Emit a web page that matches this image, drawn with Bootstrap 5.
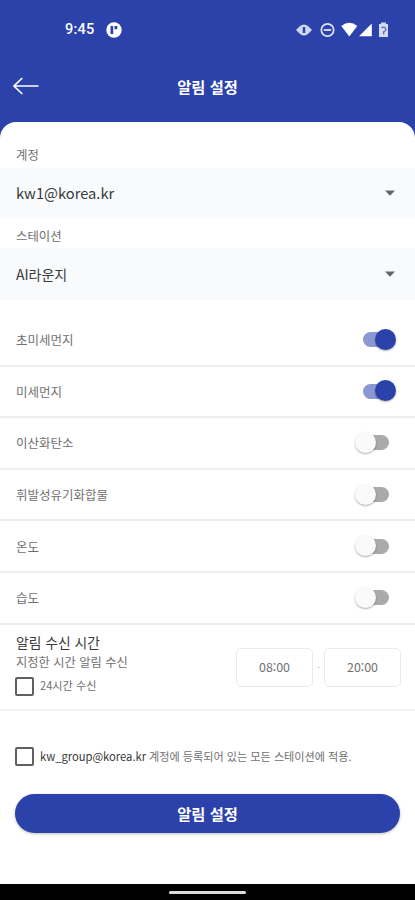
<!DOCTYPE html>
<html lang="ko">
<head>
<meta charset="utf-8">
<meta name="viewport" content="width=device-width, initial-scale=1">
<title>알림 설정</title>
<link href="https://cdn.jsdelivr.net/npm/bootstrap@5.3.0/dist/css/bootstrap.min.css" rel="stylesheet">
<style>
  :root { --brand: #2c42ab; --line: #eeeeee; }
  body { font-family: "Noto Sans CJK KR", sans-serif; background: var(--brand); color: #707070; height: 900px; overflow: hidden; line-height: 1.2; }
  svg { display: block; }
  .status { height: 60px; padding: 0 26px 0 65px; }
  .clock { font: 500 14.5px/1 Roboto, sans-serif; letter-spacing: .2px; width: 41px; padding-top: 1px; }
  .appbar { height: 62px; padding: 0 13px 10px; }
  .appbar h1 { font-size: 15.3px; }
  .appbar .edge { width: 26px; }
  .sheet { border-radius: 16px 16px 0 0; }
  .field-label { font-size: 12.4px; padding: 0 16px; }
  .first-label { height: 46px; padding-top: 20px; }
  .second-label { height: 30px; padding-top: 6px; }
  .picker { background: #f8fafc; color: #3a3a3a; font-size: 14px; padding: 0 19px 0 16px; }
  .picker.account { height: 50px; font-size: 14.7px; }
  .picker.station { height: 52px; }
  .toggles { margin-top: 15px; }
  .toggle-row { height: 51.6px; border-bottom: 2px solid var(--line); padding: 0 19px 0 16px; font-size: 12.5px; }
  .track { width: 34px; height: 22px; }
  .track::before { content: ""; width: 26px; height: 15px; border-radius: 8px; background: #aaa; margin-left: 1px; }
  .knob { width: 21px; height: 21px; left: -7px; top: 0; background: #fafafa; box-shadow: 0 1px 2px rgba(0,0,0,.32); }
  .track.on::before { background: #8c98d1; }
  .track.on .knob { left: 13px; background: var(--brand); }
  .times { height: 86px; padding: 7px 14px 0 16px; border-bottom: 2px solid #f3f3f3; }
  .times h2 { font-size: 13.8px; line-height: 20px; color: #3a3a3a; font-weight: 400; }
  .times p { font-size: 12.25px; line-height: 20px; }
  .check-row { margin-top: 5px; }
  .box { width: 19px; height: 19px; border: 2px solid #606060; border-radius: 2px; margin: 0 6px 0 -1px; }
  .small-text { font-size: 11.15px; }
  .time-box { width: 77px; height: 39px; border: 1.5px solid #e9e9e9; border-radius: 5px; font-size: 12.4px; }
  .dash { width: 11px; color: #ccc; font-size: 10px; }
  .apply { margin: 36px 16px 0; height: 20px; }
  .apply .small-text { letter-spacing: -.03px; }
  .apply b { font-weight: 400; color: #3a3a3a; font-size: 11.25px; }
  .submit, .submit:hover { margin: 27px 15px 0; height: 39px; background: var(--brand); color: #fff; font-size: 15.3px; box-shadow: 0 1px 3px rgba(0,0,0,.25); }
  .navbar-strip { height: 16px; }
  .navbar-strip span { width: 77px; height: 3px; background: #ddd; }
</style>
</head>
<body class="d-flex flex-column">
<header class="text-white flex-shrink-0">
  <div class="status d-flex align-items-center">
    <span class="clock">9:45</span>
    <svg width="16" height="16" viewBox="0 0 16 16"><circle cx="8" cy="8" r="7.7" fill="#fff"/><path d="M4.5 4h2.7v8H4.5zM8.5 4h2.8v3.2H8.5z" fill="#2c42ab"/></svg>
    <svg class="ms-auto" width="93" height="18" viewBox="296 21 93 18">
      <path d="M296 30l4-4q4-3 8 0l4 4-4 4q-4 3-8 0z" fill="#cfd5f0"/><path d="M302.8 27h2.4v6h-2.4z" fill="#2c42ab"/>
      <circle cx="327.5" cy="30" r="6.2" fill="none" stroke="#e0e4f6" stroke-width="1.7"/><path d="M323.8 30h7.4" stroke="#e0e4f6" stroke-width="1.8"/>
      <path d="M341.3 26q8-6.5 16 0l-8 10.5z" fill="#fff"/><path d="M371.8 23.5v12.8H359z" fill="#fff"/>
      <path d="M381 22.5h5v1.5h2v13h-9V24h2z" fill="#d5daf2"/><path d="M381.5 28.2q2-2 3.8 0t-1.6 3.5v2.8" fill="none" stroke="#5366bd" stroke-width="1.2"/>
    </svg>
  </div>
  <div class="appbar d-flex align-items-center justify-content-between">
    <svg class="edge" width="26" height="18" viewBox="0 0 26 18" fill="none" stroke="#fff" stroke-width="1.7"><path d="M25.5 9H1M9.3 1L1 9l8.3 8"/></svg>
    <h1 class="m-0 fw-bold">알림 설정</h1>
    <span class="edge"></span>
  </div>
</header>
<main class="sheet bg-white flex-grow-1 d-flex flex-column">
  <div class="field-label first-label d-flex align-items-center">계정</div>
  <div class="picker account d-flex align-items-center justify-content-between"><span>kw1@korea.kr</span><svg width="12" height="6" viewBox="0 0 12 6"><path d="M1 .5h10L6 5.7z" fill="#666"/></svg></div>
  <div class="field-label second-label d-flex align-items-center">스테이션</div>
  <div class="picker station d-flex align-items-center justify-content-between"><span>AI라운지</span><svg width="12" height="6" viewBox="0 0 12 6"><path d="M1 .5h10L6 5.7z" fill="#666"/></svg></div>
  <div class="toggles">
    <div class="toggle-row d-flex align-items-center justify-content-between">초미세먼지<span class="track on position-relative d-flex align-items-center"><i class="knob rounded-circle position-absolute"></i></span></div>
    <div class="toggle-row d-flex align-items-center justify-content-between">미세먼지<span class="track on position-relative d-flex align-items-center"><i class="knob rounded-circle position-absolute"></i></span></div>
    <div class="toggle-row d-flex align-items-center justify-content-between">이산화탄소<span class="track position-relative d-flex align-items-center"><i class="knob rounded-circle position-absolute"></i></span></div>
    <div class="toggle-row d-flex align-items-center justify-content-between">휘발성유기화합물<span class="track position-relative d-flex align-items-center"><i class="knob rounded-circle position-absolute"></i></span></div>
    <div class="toggle-row d-flex align-items-center justify-content-between">온도<span class="track position-relative d-flex align-items-center"><i class="knob rounded-circle position-absolute"></i></span></div>
    <div class="toggle-row d-flex align-items-center justify-content-between">습도<span class="track position-relative d-flex align-items-center"><i class="knob rounded-circle position-absolute"></i></span></div>
  </div>
  <section class="times d-flex justify-content-between">
    <div>
      <h2 class="m-0">알림 수신 시간</h2>
      <p class="m-0">지정한 시간 알림 수신</p>
      <div class="check-row d-flex align-items-center"><span class="box"></span><span class="small-text text-nowrap">24시간 수신</span></div>
    </div>
    <div class="d-flex align-items-center align-self-start pt-3">
      <span class="time-box d-flex align-items-center justify-content-center">08:00</span>
      <span class="dash text-center">-</span>
      <span class="time-box d-flex align-items-center justify-content-center">20:00</span>
    </div>
  </section>
  <div class="apply d-flex align-items-center"><span class="box flex-shrink-0"></span><span class="small-text text-nowrap"><b>kw_group@korea.kr</b> 계정에 등록되어 있는 모든 스테이션에 적용.</span></div>
  <button class="submit btn rounded-pill border-0 fw-bold p-0" type="button">알림 설정</button>
</main>
<footer class="navbar-strip bg-black d-flex align-items-center justify-content-center flex-shrink-0"><span class="rounded-pill"></span></footer>
<script src="https://cdn.jsdelivr.net/npm/bootstrap@5.3.0/dist/js/bootstrap.bundle.min.js"></script>
</body>
</html>
